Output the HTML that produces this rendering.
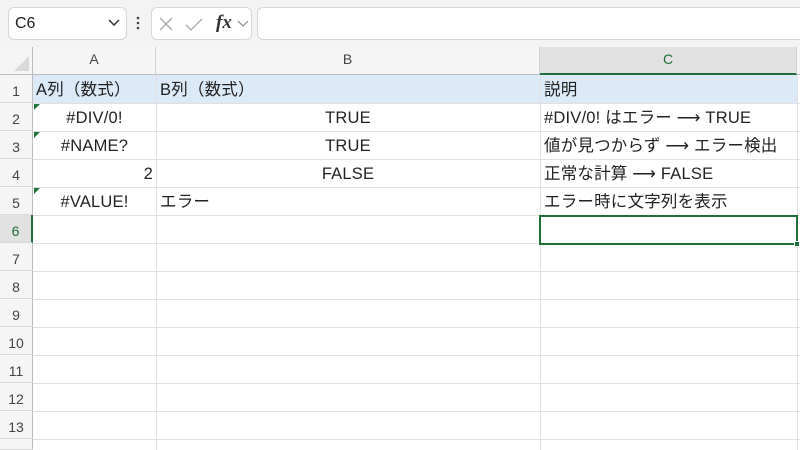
<!DOCTYPE html><html style="width:800px;height:450px;overflow:hidden"><head><meta charset="utf-8"><style>
*{margin:0;padding:0;box-sizing:border-box}
body{width:800px;height:450px;overflow:hidden;background:#fff;font-family:"Liberation Sans","Noto Sans CJK JP",sans-serif;position:relative;color:#222}
.a{position:absolute}
.top{left:0;top:0;width:800px;height:47px;background:#f3f3f3}
.box{background:#fff;border:1px solid #d6d6d6;border-radius:6px}
.ch{top:47px;height:28px;background:#f5f5f5;color:#444;font-size:14px;text-align:center;line-height:24px;border-right:1px solid #d4d4d4;border-bottom:1px solid #bdbdbd}
.rh{left:0;width:33px;height:28px;background:#f5f5f5;color:#444;font-size:14px;text-align:center;line-height:33px;border-right:1px solid #bdbdbd;border-bottom:1px solid #dadada}
.hl{left:33px;height:1px;width:767px;background:#e1e1e1}
.vl{top:75px;width:1px;height:375px;background:#e1e1e1}
.t{font-size:16.5px;line-height:31px;white-space:nowrap;letter-spacing:0.2px}
.tri{width:0;height:0;border-top:6px solid #1e7a3a;border-right:6px solid transparent}
</style></head><body>
<div class="a top"></div>
<div class="a box" style="left:8px;top:7px;width:119px;height:33px"></div>
<div class="a" style="left:15px;top:15px;font-size:16px;color:#222">C6</div>
<svg class="a" style="left:108px;top:19px" width="12" height="8"><path d="M1 1 L6 6 L11 1" stroke="#333" stroke-width="1.5" fill="none"/></svg>
<svg class="a" style="left:136px;top:16px" width="4" height="14"><circle cx="2" cy="2" r="1.3" fill="#444"/><circle cx="2" cy="7" r="1.3" fill="#444"/><circle cx="2" cy="12" r="1.3" fill="#444"/></svg>
<div class="a box" style="left:151px;top:7px;width:101px;height:33px"></div>
<svg class="a" style="left:158px;top:16px" width="16" height="16"><path d="M2 2 L14 14 M14 2 L2 14" stroke="#aaa" stroke-width="1.3"/></svg>
<svg class="a" style="left:184px;top:16px" width="20" height="16"><path d="M2 9 L7 14 L18 3" stroke="#aaa" stroke-width="1.3" fill="none"/></svg>
<div class="a" style="left:216px;top:12px;font-family:'Liberation Serif',serif;font-style:italic;font-weight:bold;font-size:19px;color:#333">fx</div>
<svg class="a" style="left:237px;top:20px" width="12" height="8"><path d="M1 1 L6 6 L11 1" stroke="#888" stroke-width="1.2" fill="none"/></svg>
<div class="a box" style="left:257px;top:7px;width:560px;height:33px"></div>

<div class="a" style="left:0;top:47px;width:33px;height:28px;background:#f5f5f5;border-right:1px solid #bdbdbd;border-bottom:1px solid #bdbdbd"></div>
<svg class="a" style="left:10px;top:56px" width="20" height="16"><path d="M19 0 L19 15 L4 15 Z" fill="#d9d9d9"/></svg>
<div class="a ch" style="left:33px;width:123px">A</div>
<div class="a ch" style="left:156px;width:384px">B</div>
<div class="a ch" style="left:540px;width:257px;background:#e1e1e1;color:#1e6e3a;border-bottom:2px solid #1e6e3a">C</div>
<div class="a ch" style="left:797px;width:10px;border-right:none"></div>

<div class="a" style="left:33px;top:75px;width:764px;height:28px;background:#dce9f6"></div>
<div class="a vl" style="left:156px"></div>
<div class="a vl" style="left:540px"></div>
<div class="a vl" style="left:797px"></div>

<div class="a hl" style="top:103px"></div><div class="a hl" style="top:131px"></div><div class="a hl" style="top:159px"></div><div class="a hl" style="top:187px"></div><div class="a hl" style="top:215px"></div><div class="a hl" style="top:243px"></div><div class="a hl" style="top:271px"></div><div class="a hl" style="top:299px"></div><div class="a hl" style="top:327px"></div><div class="a hl" style="top:355px"></div><div class="a hl" style="top:383px"></div><div class="a hl" style="top:411px"></div><div class="a hl" style="top:439px"></div>

<div class="a rh" style="top:75px">1</div>
<div class="a rh" style="top:103px">2</div>
<div class="a rh" style="top:131px">3</div>
<div class="a rh" style="top:159px">4</div>
<div class="a rh" style="top:187px">5</div>
<div class="a rh" style="top:215px;background:#e1e1e1;color:#1e6e3a;border-right:2px solid #1e6e3a">6</div>
<div class="a rh" style="top:243px">7</div>
<div class="a rh" style="top:271px">8</div>
<div class="a rh" style="top:299px">9</div>
<div class="a rh" style="top:327px">10</div>
<div class="a rh" style="top:355px">11</div>
<div class="a rh" style="top:383px">12</div>
<div class="a rh" style="top:411px">13</div>
<div class="a rh" style="top:439px;height:11px"></div>

<div class="a t" style="left:36px;top:75px">A列（数式）</div>
<div class="a t" style="left:160px;top:75px">B列（数式）</div>
<div class="a t" style="left:544px;top:75px">説明</div>

<div class="a tri" style="left:34px;top:104px"></div>
<div class="a tri" style="left:34px;top:132px"></div>
<div class="a tri" style="left:34px;top:188px"></div>
<div class="a t" style="left:33px;width:123px;text-align:center;top:103px">#DIV/0!</div>
<div class="a t" style="left:33px;width:123px;text-align:center;top:131px">#NAME?</div>
<div class="a t" style="left:33px;width:120px;text-align:right;top:159px">2</div>
<div class="a t" style="left:33px;width:123px;text-align:center;top:187px">#VALUE!</div>

<div class="a t" style="left:156px;width:384px;text-align:center;top:103px">TRUE</div>
<div class="a t" style="left:156px;width:384px;text-align:center;top:131px">TRUE</div>
<div class="a t" style="left:156px;width:384px;text-align:center;top:159px">FALSE</div>
<div class="a t" style="left:160px;top:187px">エラー</div>

<div class="a t" style="left:544px;top:103px">#DIV/0! はエラー ⟶ TRUE</div>
<div class="a t" style="left:544px;top:131px">値が見つからず ⟶ エラー検出</div>
<div class="a t" style="left:544px;top:159px">正常な計算 ⟶ FALSE</div>
<div class="a t" style="left:544px;top:187px">エラー時に文字列を表示</div>

<div class="a" style="left:539px;top:215px;width:259px;height:30px;border:2px solid #1e6e3a"></div>
<div class="a" style="left:794px;top:241px;width:6px;height:6px;background:#1e6e3a;border:1px solid #fff"></div>
</body></html>
